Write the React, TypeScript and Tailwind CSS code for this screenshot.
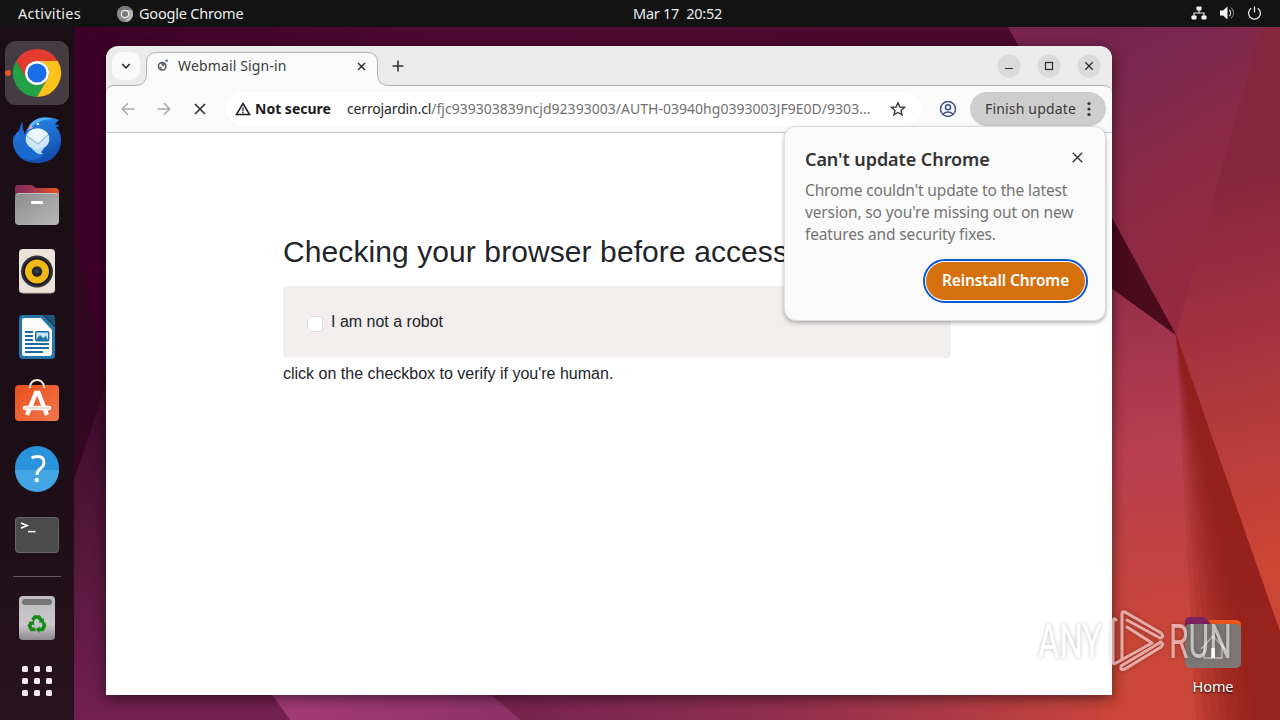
import React from 'react';

const Wallpaper: React.FC = () => (
  <svg className="absolute inset-0" width="1280" height="720" viewBox="0 0 1280 720">
    <defs>
      <linearGradient id="base" x1="0" y1="0" x2="1" y2="0">
        <stop offset="0" stopColor="#3a0026" />
        <stop offset="0.35" stopColor="#4d0a33" />
        <stop offset="0.8" stopColor="#4a0a2c" />
      </linearGradient>
      <linearGradient id="leftSide" gradientUnits="userSpaceOnUse" x1="80" y1="380" x2="110" y2="720">
        <stop offset="0" stopColor="#3c0a2a" />
        <stop offset="0.5" stopColor="#56183d" />
        <stop offset="1" stopColor="#72204f" />
      </linearGradient>
      <linearGradient id="bottomPink" gradientUnits="userSpaceOnUse" x1="270" y1="0" x2="520" y2="0">
        <stop offset="0" stopColor="#a43c76" />
        <stop offset="1" stopColor="#8f3167" />
      </linearGradient>
      <linearGradient id="bottom" gradientUnits="userSpaceOnUse" x1="490" y1="0" x2="1110" y2="0">
        <stop offset="0" stopColor="#75224f" />
        <stop offset="0.5" stopColor="#93304f" />
        <stop offset="1" stopColor="#c9453b" />
      </linearGradient>
      <linearGradient id="upper" gradientUnits="userSpaceOnUse" x1="1090" y1="60" x2="1240" y2="300">
        <stop offset="0" stopColor="#77254f" />
        <stop offset="0.45" stopColor="#8a2a48" />
        <stop offset="1" stopColor="#962a3e" />
      </linearGradient>
      <linearGradient id="right" gradientUnits="userSpaceOnUse" x1="1200" y1="180" x2="1300" y2="560">
        <stop offset="0" stopColor="#84263f" />
        <stop offset="0.35" stopColor="#a03040" />
        <stop offset="0.75" stopColor="#bd3f3a" />
        <stop offset="1" stopColor="#cb4634" />
      </linearGradient>
      <linearGradient id="lower" gradientUnits="userSpaceOnUse" x1="1112" y1="290" x2="1130" y2="640">
        <stop offset="0" stopColor="#97304a" />
        <stop offset="0.45" stopColor="#b83e50" />
        <stop offset="1" stopColor="#c94638" />
      </linearGradient>
    </defs>
    <rect width="1280" height="720" fill="url(#base)" />
    <path d="M74 230L106 385L74 470Z" fill="#330922" />
    <path d="M106 385L74 480V720H300V385Z" fill="url(#leftSide)" />
    <path d="M262 680L290 720H540V680Z" fill="url(#bottomPink)" />
    <path d="M475 680L520 720H1120V680Z" fill="url(#bottom)" />
    <path d="M1008 27H1280V200L1176 335L1112 218L1040 85Z" fill="url(#upper)" />
    <path d="M1100 196L1176 335L1100 280Z" fill="#4a0b1d" />
    <path d="M1261 27H1280V640L1176 335Z" fill="url(#right)" />
    <path d="M1100 280L1176 335L1280 635V720H1100Z" fill="url(#lower)" />
    {/* Soft shade towards the crease */}
    {[1196, 1204, 1212, 1220, 1227, 1234, 1241, 1248, 1255, 1262].map((x) => (
      <path key={x} d={`M1176 335L1280 632V720H${x}Z`} fill="#8c1f18" opacity="0.17" />
    ))}
  </svg>
);

const ChromeIcon = () => (
  <svg width="64" height="64" viewBox="-32 -32 64 64">
    <path d="M-20.8-12A24 24 0 0 1 20.8-12H0A12 12 0 0 0-10.4 6Z" fill="#e33b2e" />
    <path d="M-20.8-12A24 24 0 0 0 0 24L10.4 6A12 12 0 0 1-10.4 6Z" fill="#24a147" />
    <path d="M20.8-12A24 24 0 0 1 0 24L10.4 6A12 12 0 0 0 0-12Z" fill="#fdc31c" />
    <circle r="12" fill="#fff" />
    <circle r="9.6" fill="#1a6fe8" />
  </svg>
);

const ThunderbirdIcon = () => (
  <svg width="64" height="64" viewBox="0 -1 64 64">
    <defs>
      <linearGradient id="bird" x1="0" y1="0" x2="0.3" y2="1">
        <stop offset="0" stopColor="#2b8cf0" />
        <stop offset="1" stopColor="#1450b0" />
      </linearGradient>
    </defs>
    <path d="M17 14C15 18 15 21 14 23C9 26 7 34 9 40C12 50 21 55 32 55C46 55 56 46 56 32C56 26 54 22 51 19L55 18L50 16L54 12C47 9 34 7 28 14C24 18 21 21 20 27C19 22 16 20 17 14Z" fill="url(#bird)" />
    <path d="M18 14C13 20 12 32 19 39C13 37 9 32 9 26C7 33 9 42 15 48C24 55 36 52 40 45L26 42L21 30C18 26 17 20 18 14Z" fill="#1a6bcf" />
    <path d="M24 18C28 11 38 8 48 11C38 11 31 14 25 21Z" fill="#57b6fb" />
    <ellipse cx="32.5" cy="31" rx="11.8" ry="10.5" fill="#cfe7fa" />
    <path d="M22 27L33 36L43 26Q39 20.500 32.500 20.500Q25 20.500 22 27Z" fill="#e8f5fd" />
    <path d="M22 28L33 36L43 27" stroke="#9bbfdd" strokeWidth="1.3" fill="none" />
    <path d="M26 40C31 42 36 41 40 38C38 43 34 44 38 46C31 47 29 42 26 40Z" fill="#b5dcff" />
    <path d="M26 17L22 22L28 20Z" fill="#dca6b8" />
    <circle cx="33" cy="16" r="1.2" fill="#fff" />
  </svg>
);

const FilesIcon = () => (
  <svg width="64" height="64" viewBox="0 0 64 64">
    <defs>
      <linearGradient id="folderBack" x1="0" x2="1">
        <stop offset="0" stopColor="#7d2b5a" />
        <stop offset="0.45" stopColor="#a93a4e" />
        <stop offset="1" stopColor="#e9551f" />
      </linearGradient>
      <linearGradient id="folderFront" x1="0" x2="1" y1="0" y2="1">
        <stop offset="0" stopColor="#8b8b8b" />
        <stop offset="1" stopColor="#b9b9b9" />
      </linearGradient>
    </defs>
    <path d="M10 15Q10 12 13 12H26Q28 12 29 13.500L31 15H50Q54 15 54 19V35H10Z" fill="url(#folderBack)" />
    <rect x="10" y="20" width="44" height="32" rx="4" fill="url(#folderFront)" />
    <path d="M11 22Q12 20 15 20.500H50Q53 20 53.500 22" stroke="#c8c8c8" strokeWidth="0.8" fill="none" />
    <rect x="26" y="28" width="12" height="3" rx="0.8" fill="#fff" />
  </svg>
);

const RhythmboxIcon = () => (
  <svg width="64" height="64" viewBox="0 0 64 64">
    <rect x="14" y="10" width="36" height="44" rx="4" fill="#e9e3da" />
    <path d="M14 50Q14 54 18 54H46Q50 54 50 50" stroke="#bdb6ab" fill="none" />
    <circle cx="32" cy="32.500" r="16" fill="#333238" />
    <circle cx="32" cy="32.500" r="13.800" fill="#17161a" />
    <circle cx="32" cy="32.500" r="12" fill="#f0b917" />
    <circle cx="32" cy="32.500" r="5.200" fill="#23262e" />
    <circle cx="32" cy="32.500" r="2" fill="#3a4352" />
  </svg>
);

const WriterIcon = () => (
  <svg width="64" height="64" viewBox="0 0 64 64">
    <path d="M18 10H38L50 22V50Q50 54 46 54H18Q14 54 14 50V14Q14 10 18 10Z" fill="#2277a8" />
    <path d="M39 10H48Q50 10 50 12V21Z" fill="#20587b" />
    <path d="M19 13H36L47 25V48Q47 51 44 51H19Q17 51 17 48V15Q17 13 19 13Z" fill="#fafcfd" />
    <path d="M20 27H28M20 31H28M20 35H28M20 39H44M20 43H44M20 47H38" stroke="#1b6c9b" strokeWidth="1.8" />
    <rect x="30.700" y="26.700" width="13" height="9" rx="1" fill="#c4e5f6" stroke="#1b6c9b" strokeWidth="1.4" />
    <path d="M31.500 34L35 30L38 33L41 31L43 35H31.500Z" fill="#2277a8" />
  </svg>
);

const SoftwareIcon = () => (
  <svg width="64" height="64" viewBox="0 0 64 64">
    <defs>
      <linearGradient id="bag" x1="0" x2="1" y1="0" y2="1">
        <stop offset="0" stopColor="#ea4f1d" />
        <stop offset="1" stopColor="#f2764b" />
      </linearGradient>
    </defs>
    <rect x="10" y="14" width="44" height="36" rx="4" fill="url(#bag)" />
    <path d="M25 17V16A7 7 0 0 1 39 16V17" stroke="#fbe4db" strokeWidth="2" fill="none" />
    <path d="M22 44L31 22H33.500L42 44" stroke="#fff" strokeWidth="4.4" fill="none" />
    <path d="M20 37H44" stroke="#fff" strokeWidth="4.5" strokeLinecap="round" />
    <path d="M19 37H45" stroke="#f4a589" strokeWidth="0.8" />
  </svg>
);

const HelpIcon = () => (
  <svg width="64" height="64" viewBox="0 1 64 64">
    <circle cx="32" cy="32" r="22" fill="#2b93dc" />
    <path d="M10 34A22 22 0 0 0 54 34Z" fill="#43a5e4" />
    <path d="M26.500 22Q29 20.500 32.500 20.500Q39 20.500 39 26.500Q39 30 35.500 32.500Q32 35 32 39" stroke="#fff" strokeWidth="2.8" fill="none" />
    <circle cx="31.800" cy="44" r="2.200" fill="#fff" />
  </svg>
);

const TerminalIcon = () => (
  <svg width="64" height="64" viewBox="0 0 64 64">
    <rect x="10" y="14" width="44" height="36" rx="4" fill="#4b4b4b" />
    <rect x="10.500" y="14.500" width="43" height="35" rx="3.500" fill="none" stroke="#666" />
    <path d="M16 20L22 22.600L16 25.200" stroke="#fff" strokeWidth="1.7" fill="none" />
    <path d="M23 28.600H30.500" stroke="#fff" strokeWidth="1.5" />
  </svg>
);

const TrashIcon = () => (
  <svg width="64" height="64" viewBox="0 0 64 64">
    <defs>
      <linearGradient id="bin" x1="0" x2="0" y1="0" y2="1">
        <stop offset="0" stopColor="#bdbdbd" />
        <stop offset="0.65" stopColor="#cbc8cb" />
        <stop offset="1" stopColor="#8f898f" />
      </linearGradient>
    </defs>
    <rect x="14" y="10" width="36" height="44" rx="4" fill="url(#bin)" />
    <rect x="17" y="13" width="30" height="6" rx="3" fill="#767676" />
    <g fill="none" stroke="#168a16" strokeWidth="3.6">
      <path d="M27.500 34L30 31H34L36.500 35" />
      <path d="M38.500 36.500L39.500 39.500L37.500 43.500H33" />
      <path d="M30.500 43.500H26.500L24.500 40L26.500 36" />
    </g>
    <path d="M33.500 36.500L39 37L38.700 32ZM34.500 40.200V47L30.800 43.500ZM23.500 36.500L28.800 34.800L29.300 39.500Z" fill="#168a16" />
  </svg>
);

const dockIcons = [
  ChromeIcon,
  ThunderbirdIcon,
  FilesIcon,
  RhythmboxIcon,
  WriterIcon,
  SoftwareIcon,
  HelpIcon,
  TerminalIcon,
];

const TopBar = () => (
  <div className="relative flex h-[27px] items-center justify-between bg-[#131313] text-[14.5px] text-[#ececec]">
    <div className="flex items-center pl-[18px]">
      <span className="w-[99px] tracking-[0.25px]">Activities</span>
      <svg className="mr-[6px]" width="16" height="16" viewBox="-8 -8 16 16">
        <circle r="8" fill="#8b8b8b" />
        <path d="M-7-4A8 8 0 0 1 7-4H0Z" fill="#777" />
        <path d="M7-4A8 8 0 0 1 0 8L3.500 2L0-4Z" fill="#b5b5b5" />
        <circle r="3.600" fill="#777" stroke="#eee" strokeWidth="1.2" />
      </svg>
      <span className="tracking-[-0.2px]">Google Chrome</span>
    </div>
    <div className="absolute top-[3px] left-[633px] leading-[20px] tracking-[-0.25px] whitespace-pre">Mar 17  20:52</div>
    <div className="flex items-center gap-[12px] pr-[18px] pb-px">
      <svg width="16" height="16" viewBox="0 0 16 16" fill="#f2f2f2">
        <rect x="5.500" y="1.500" width="5" height="4" rx="0.8" />
        <rect x="0.5" y="10.500" width="5" height="4" rx="0.8" />
        <rect x="10.500" y="10.500" width="5" height="4" rx="0.8" />
        <path d="M8 5V8M3 11V8H13V11" fill="none" stroke="#f2f2f2" strokeWidth="1.1" />
      </svg>
      <svg width="16" height="16" viewBox="0 0 16 16">
        <path d="M1 5.500H4L8.500 1.500V14.500L4 10.500H1Z" fill="#f2f2f2" />
        <path d="M10.300 5A4 4 0 0 1 10.300 11" stroke="#ddd" strokeWidth="1.1" fill="none" />
        <path d="M12 2.800A6.500 6.500 0 0 1 12 13.200" stroke="#777" strokeWidth="1.1" fill="none" />
      </svg>
      <svg width="15" height="16" viewBox="0 0 16 16" fill="none" stroke="#f2f2f2" strokeWidth="1.3">
        <path d="M4.500 3A6.300 6.300 0 1 0 11.500 3M8 1V7.500" />
      </svg>
    </div>
  </div>
);

const Dock = () => (
  <div className="flex w-[74px] flex-col items-center bg-[linear-gradient(#1b0f17,#1c0e16_60%,#28131f)] pt-[13px]">
    {dockIcons.map((Icon, index) => (
      <div key={index} className="flex h-[66px] w-full items-center justify-center">
        {index === 0 ? (
          <div className="relative rounded-[11px] bg-[#453c43]">
            <span className="absolute top-[29px] left-0 h-[6px] w-[6px] rounded-full bg-[#e95420]" />
            <Icon />
          </div>
        ) : (
          <Icon />
        )}
      </div>
    ))}
    <div className="my-[8px] h-px w-[48px] shrink-0 bg-[#65595f]" />
    <div className="flex h-[66px] items-center">
      <TrashIcon />
    </div>
    <div className="grid grid-cols-3 gap-[6px] pt-[15px]">
      {Array.from({ length: 9 }).map((_, i) => (
        <span key={i} className="h-[6px] w-[6px] rounded-[1.5px] bg-[#f8edf5]" />
      ))}
    </div>
  </div>
);

const TabStrip = () => (
  <div className="flex h-[39px] items-start bg-[#ebebeb]">
    <div className="mt-[6px] ml-[6px] flex h-[28px] w-[28px] items-center justify-center rounded-[9px] bg-[#f9f9f9]">
      <svg width="10" height="10" viewBox="0 0 10 10" fill="none" stroke="#2d2d2d" strokeWidth="1.7">
        <path d="M1.200 3L5 6.800L8.800 3" />
      </svg>
    </div>
    <div className="relative z-10 mt-[6px] ml-[6px] flex h-[34px] w-[232px] items-start rounded-t-[10px] bg-[#fafafa] pt-[5px] pl-[11px] text-[#3c3c3c]">
      {/* Tab outline with its flared feet */}
      <svg className="absolute top-0 -left-[11px]" width="254" height="34" viewBox="0 0 254 34">
        <path d="M0 34V33.500Q11.500 33.500 11.500 22V34ZM254 34V33.500Q242.500 33.500 242.500 22V34Z" fill="#fafafa" />
        <path d="M0 33.500Q11.500 33.500 11.500 22V10.500Q11.500 0.500 21.500 0.500H232.500Q242.500 0.500 242.500 10.500V22Q242.500 33.500 254 33.500" fill="none" stroke="#b1b1b1" />
      </svg>
      <svg className="mr-[7px]" width="14" height="16" viewBox="0 0 14 16">
        <circle cx="5.200" cy="9.200" r="3.800" fill="#fff" stroke="#555a5f" strokeWidth="1.5" />
        <path d="M2 9.500L5 10.300L4 12.500ZM4 6L8.500 6.500L6.500 9.500L4.500 8Z" fill="#555a5f" />
        <circle cx="9.700" cy="3.800" r="1.300" fill="#3c68c7" />
      </svg>
      <span className="w-[179px] text-[14px] leading-[18px] tracking-[0.15px]">Webmail Sign-in</span>
      <svg className="mt-[5px]" width="9" height="9" viewBox="0 0 9 9" stroke="#333" strokeWidth="1.5">
        <path d="M1 1L8 8M8 1L1 8" />
      </svg>
    </div>
    <svg className="mt-[14px] ml-[14px]" width="12" height="12" viewBox="0 0 12 12" stroke="#333" strokeWidth="1.6">
      <path d="M6 0.500V11.500M0.500 6H11.500" />
    </svg>
    <div className="mt-[8px] mr-[11px] ml-auto flex gap-[16px]">
      <svg width="24" height="24" viewBox="0 0 24 24">
        <circle cx="12" cy="12" r="11.500" fill="#dadada" />
        <path d="M8 14.500H16" stroke="#2d2d2d" strokeWidth="1.2" />
      </svg>
      <svg width="24" height="24" viewBox="0 0 24 24">
        <circle cx="12" cy="12" r="11.500" fill="#dadada" />
        <rect x="8.500" y="8.500" width="7" height="7" stroke="#2d2d2d" strokeWidth="1.2" fill="none" />
      </svg>
      <svg width="24" height="24" viewBox="0 0 24 24">
        <circle cx="12" cy="12" r="11.500" fill="#dadada" />
        <path d="M8.300 8.300L15.700 15.700M15.700 8.300L8.300 15.700" stroke="#2d2d2d" strokeWidth="1.3" />
      </svg>
    </div>
  </div>
);

const Toolbar = () => (
  <div className="bg-[#ebebeb]">
    <div className="flex h-[48px] items-center rounded-t-[8px] border-t border-b border-t-[#b1b1b1] border-b-[#c9c9c9] bg-[#fafafa] pr-[6px] pl-[15px]">
      <svg width="14" height="14" viewBox="0 0 14 14" fill="none" stroke="#a9a9a9" strokeWidth="1.5">
        <path d="M13.500 7H1.500M7 1.200L1.200 7L7 12.800" />
      </svg>
      <svg className="ml-[22px]" width="14" height="14" viewBox="0 0 14 14" fill="none" stroke="#a9a9a9" strokeWidth="1.5">
        <path d="M0.500 7H12.500M7 1.200L12.800 7L7 12.800" />
      </svg>
      <svg className="ml-[23px]" width="12" height="12" viewBox="0 0 12 12" stroke="#2f2f2f" strokeWidth="1.6">
        <path d="M1 1L11 11M11 1L1 11" />
      </svg>
      <div className="ml-[20px] flex h-[34px] w-[695px] items-center rounded-full bg-white pl-[9px]">
        <svg width="16" height="14" viewBox="0 0 16 14" fill="none" stroke="#1f1f1f" strokeWidth="1.5">
          <path d="M8 1.500L14.600 12.600H1.400Z" />
          <path d="M8 5.500V9M8 9.800V11.200" strokeWidth="1.3" />
        </svg>
        <span className="ml-[4px] w-[92px] pb-[2px] text-[14px] font-bold whitespace-nowrap text-[#1a1a1a]">Not secure</span>
        <span className="w-[526px] pb-[2px] text-[14px] tracking-[0.02px] whitespace-nowrap text-[#707070]">
          <span className="tracking-[-0.15px] text-[#1f1f1f]">cerrojardin.cl</span>
          /fjc939303839ncjd92393003/AUTH-03940hg0393003JF9E0D/9303…
        </span>
        <svg className="ml-[17px]" width="16" height="16" viewBox="0 0 16 16" fill="none" stroke="#3a3a3a" strokeWidth="1.4">
          <path d="M8 1.800L9.900 6L14.400 6.400L11 9.400L12 13.900L8 11.500L4 13.900L5 9.400L1.600 6.400L6.100 6Z" />
        </svg>
      </div>
      <svg className="ml-[18px]" width="18" height="18" viewBox="0 0 18 18" fill="none" stroke="#3f5290" strokeWidth="1.5">
        <circle cx="9" cy="9" r="7.500" />
        <circle cx="9" cy="7.200" r="2.500" />
        <path d="M3.800 14Q9 9.800 14.200 14" />
      </svg>
      <div className="ml-auto flex h-[34px] w-[136px] items-center rounded-full bg-[#cecece] pl-[15px] text-[14px] text-[#3a3a3a]">
        <span className="w-[102px] pb-[2px] tracking-[0.17px] whitespace-nowrap">Finish update</span>
        <svg width="4" height="16" viewBox="0 0 4 16" fill="#333">
          <circle cx="2" cy="2.500" r="1.600" />
          <circle cx="2" cy="8" r="1.600" />
          <circle cx="2" cy="13.500" r="1.600" />
        </svg>
      </div>
    </div>
  </div>
);

const UpdateBubble = () => (
  <div className="absolute top-[80px] left-[678px] z-20 flex h-[195px] w-[322px] flex-col rounded-[12px] border border-[#dedede] bg-[#fafafa] px-[20px] pt-[20px] shadow-[0_2px_4px_rgba(0,0,0,0.3)]">
    <div className="flex items-start justify-between">
      <h2 className="text-[18px] leading-[25px] font-semibold tracking-[-0.08px] text-[#333]">Can't update Chrome</h2>
      <svg className="mt-[5px] mr-[2px]" width="11" height="11" viewBox="0 0 11 11" stroke="#333" strokeWidth="1.4">
        <path d="M0.800 0.800L10.200 10.200M10.200 0.800L0.800 10.200" />
      </svg>
    </div>
    <p className="mt-[7px] text-[15.5px] leading-[22px] tracking-[-0.14px] whitespace-nowrap text-[#747474]">
      Chrome couldn't update to the latest
      <br />
      version, so you're missing out on new
      <br />
      features and security fixes.
    </p>
    <button className="mt-[17px] flex h-[38px] w-[159px] items-center justify-center self-end rounded-full bg-[#d6700d] text-[15.5px] font-semibold tracking-[-0.1px] whitespace-nowrap text-white outline-2 outline-offset-[1.5px] outline-[#0b57d0]">
      Reinstall Chrome
    </button>
  </div>
);

const PageContent = () => (
  <div className="flex-1 bg-white pt-[101px] pl-[177px] font-['Liberation_Sans',Arial,sans-serif] text-[#212529]">
    <h1 className="text-[30px] leading-[36px] tracking-[0.09px]">Checking your browser before accessing</h1>
    <div className="mt-[16px] flex h-[72px] w-[668px] items-center rounded-[4px] bg-[#f2eeed] pl-[24px]">
      <span className="mt-[3px] h-[16px] w-[16px] rounded-[4px] border border-[#dddcdd] bg-white" />
      <span className="ml-[8px] text-[16px]">I am not a robot</span>
    </div>
    <p className="mt-[4px] text-[16px] leading-[24px]">click on the checkbox to verify if you're human.</p>
  </div>
);

const HomeFolder = () => (
  <div className="absolute top-[612px] left-[1173px] flex w-[80px] flex-col items-center">
    <svg width="60" height="60" viewBox="0 0 60 60">
      <path d="M2 10Q2 5 7 5H20Q22 5 24 7L26 8H53Q58 8 58 13V30H2Z" fill="#e9551f" />
      <path d="M2 10Q2 5 7 5H20Q22 5 24 7L28 12V24H2Z" fill="#7b2460" />
      <rect x="2" y="12" width="56" height="44" rx="5" fill="#7d7775" />
      <path d="M18 37L30 24L42 37M21 34V46H39V34" fill="none" stroke="#c4bebc" strokeWidth="1.5" />
      <rect x="28" y="36" width="4" height="10" fill="#eee" />
    </svg>
    <span className="mt-[3px] text-[14.5px] leading-[22px] tracking-[-0.1px] text-white [text-shadow:0_1px_2px_#000]">Home</span>
  </div>
);

const Watermark = () => (
  <svg className="absolute top-[600px] left-[1030px]" width="250" height="90" viewBox="0 0 250 90">
    <g className="font-[Roboto,sans-serif] [filter:drop-shadow(0_0_2px_rgba(0,0,0,0.45))]" opacity="0.55" fill="#fff">
      <text x="8" y="58" fontSize="48" fontWeight="400" textLength="64" lengthAdjust="spacingAndGlyphs">ANY</text>
      <text x="139" y="58" fontSize="48" fontWeight="400" textLength="63" lengthAdjust="spacingAndGlyphs">RUN</text>
      <g fill="none" stroke="#fff" strokeWidth="3" strokeLinejoin="round" strokeLinecap="round">
        <path d="M86 20Q83 17 83 22V62Q83 65 86 63L122 43L97 27" />
        <path d="M92 58V14Q92 11 95 12L131 33Q135 37 130 38L97 20" />
        <path d="M130 42Q135 44 131 47L95 69Q90 71 91 66L131 42" />
      </g>
    </g>
  </svg>
);

const App: React.FC = () => {
  return (
    <div className="relative flex h-[720px] w-[1280px] flex-col overflow-hidden font-['Noto_Sans',sans-serif]">
      <Wallpaper />
      <TopBar />
      <div className="relative flex flex-1">
        <Dock />
      </div>

      <HomeFolder />

      {/* Browser window */}
      <div className="absolute top-[46px] left-[106px] h-[649px] w-[1006px] rounded-t-[12px] shadow-[0_3px_14px_rgba(0,0,0,0.55)]">
        <div className="flex h-full flex-col overflow-hidden rounded-t-[12px]">
          <TabStrip />
          <Toolbar />
          <PageContent />
        </div>
        <UpdateBubble />
      </div>

      <Watermark />
    </div>
  );
};

export default App;
